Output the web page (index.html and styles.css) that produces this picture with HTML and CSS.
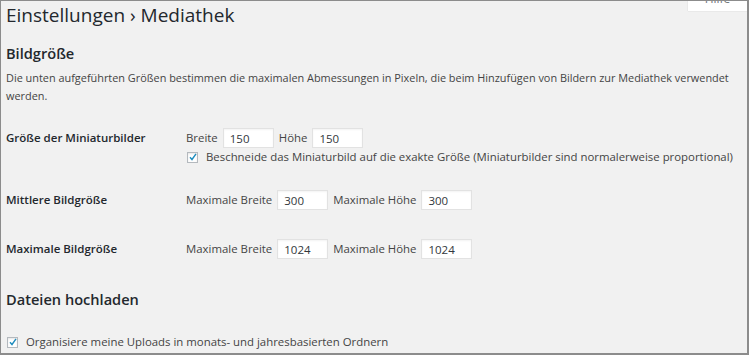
FILE: index.html
```html
<!DOCTYPE html>
<html>
<head>
    <title>Einstellungen › Mediathek</title>
    <link rel="stylesheet" href="styles.css">
</head>
<body>
    <div class="frame">
        <div class="help-tab">Hilfe</div>
        <div class="wrap">
            <h1>Einstellungen › Mediathek</h1>

            <h2>Bildgröße</h2>
            <p class="desc">Die unten aufgeführten Größen bestimmen die maximalen Abmessungen in Pixeln, die beim Hinzufügen von Bildern zur Mediathek verwendet werden.</p>

            <div class="form-table">
                <div class="row row-thumb">
                    <div class="th">Größe der Miniaturbilder</div>
                    <div class="td">
                        <div class="fields">
                            <label for="thumb_w">Breite</label>
                            <input type="text" id="thumb_w" value="150" />
                            <label for="thumb_h">Höhe</label>
                            <input type="text" id="thumb_h" value="150" />
                        </div>
                        <div class="check-line">
                            <span class="check"><svg width="8" height="8" viewBox="0 0 8 8"><path d="M1 4.2 L3 6.5 L7 0.8" fill="none" stroke="#1e8cbe" stroke-width="1.4"/></svg></span>
                            <span>Beschneide das Miniaturbild auf die exakte Größe (Miniaturbilder sind normalerweise proportional)</span>
                        </div>
                    </div>
                </div>
                <div class="row">
                    <div class="th">Mittlere Bildgröße</div>
                    <div class="td">
                        <div class="fields">
                            <label for="medium_w">Maximale Breite</label>
                            <input type="text" id="medium_w" value="300" />
                            <label for="medium_h">Maximale Höhe</label>
                            <input type="text" id="medium_h" value="300" />
                        </div>
                    </div>
                </div>
                <div class="row">
                    <div class="th">Maximale Bildgröße</div>
                    <div class="td">
                        <div class="fields">
                            <label for="large_w">Maximale Breite</label>
                            <input type="text" id="large_w" value="1024" />
                            <label for="large_h">Maximale Höhe</label>
                            <input type="text" id="large_h" value="1024" />
                        </div>
                    </div>
                </div>
            </div>

            <h2 class="uploads">Dateien hochladen</h2>
            <div class="check-line upload-line">
                <span class="check"><svg width="8" height="8" viewBox="0 0 8 8"><path d="M1 4.2 L3 6.5 L7 0.8" fill="none" stroke="#1e8cbe" stroke-width="1.4"/></svg></span>
                <span>Organisiere meine Uploads in monats- und jahresbasierten Ordnern</span>
            </div>
        </div>
    </div>
</body>
</html>
```

FILE: styles.css
```css
body {
    margin: 0;
    font-family: "Open Sans", sans-serif;
    font-size: 11.4px;
    color: #444;
    background-color: #fff;
}

.frame {
    position: relative;
    width: 746px;
    height: 352px;
    border: 1px solid #8c8c8c;
    border-width: 1px 2px 2px 1px;
    background-color: #f1f1f1;
    overflow: hidden;
}

.help-tab {
    position: absolute;
    top: -10px;
    right: 0;
    width: 59px;
    height: 20px;
    background-color: #fff;
    box-shadow: 0 0 1px rgba(0, 0, 0, 0.2);
    color: #72777c;
    font-size: 12px;
    line-height: 16px;
    text-align: center;
}

.wrap {
    padding-left: 5px;
}

h1 {
    margin: 0;
    padding-top: 1px;
    font-size: 19px;
    font-weight: 400;
    line-height: 26px;
    color: #23282d;
}

h2 {
    margin: 15px 0 0;
    font-size: 14.6px;
    font-weight: 600;
    line-height: 20px;
    color: #23282d;
}

.desc {
    margin: 6px 0 0;
    font-size: 10.9px;
    line-height: 18px;
    color: #444;
}

.form-table {
    margin-top: 9px;
}

.row {
    display: flex;
    align-items: flex-start;
    padding: 14px 0 15px;
}

.row-thumb {
    padding-bottom: 10px;
}

.th {
    width: 180px;
    font-weight: 600;
    font-size: 11.5px;
    color: #23282d;
    line-height: 20px;
}

.fields {
    display: flex;
    align-items: center;
    gap: 5px;
    line-height: 20px;
}

input[type="text"] {
    width: 51px;
    height: 20px;
    padding: 0 6px;
    margin: 0;
    border: 1px solid #e2e2e2;
    box-sizing: border-box;
    font-family: "Open Sans", sans-serif;
    font-size: 11.5px;
    color: #32373c;
    background-color: #fff;
    box-shadow: inset 0 1px 2px rgba(0, 0, 0, 0.05);
}

.check-line {
    display: flex;
    align-items: center;
    gap: 8px;
    line-height: 18px;
}

.check {
    display: flex;
    align-items: center;
    justify-content: center;
    width: 9px;
    height: 9px;
    margin-left: 1px;
    border: 1px solid #b4b9be;
    background-color: #fff;
    box-shadow: inset 0 1px 2px rgba(0, 0, 0, 0.1);
    flex: none;
}

.uploads {
    margin-top: 15px;
}

.upload-line {
    margin-top: 24px;
}
```
